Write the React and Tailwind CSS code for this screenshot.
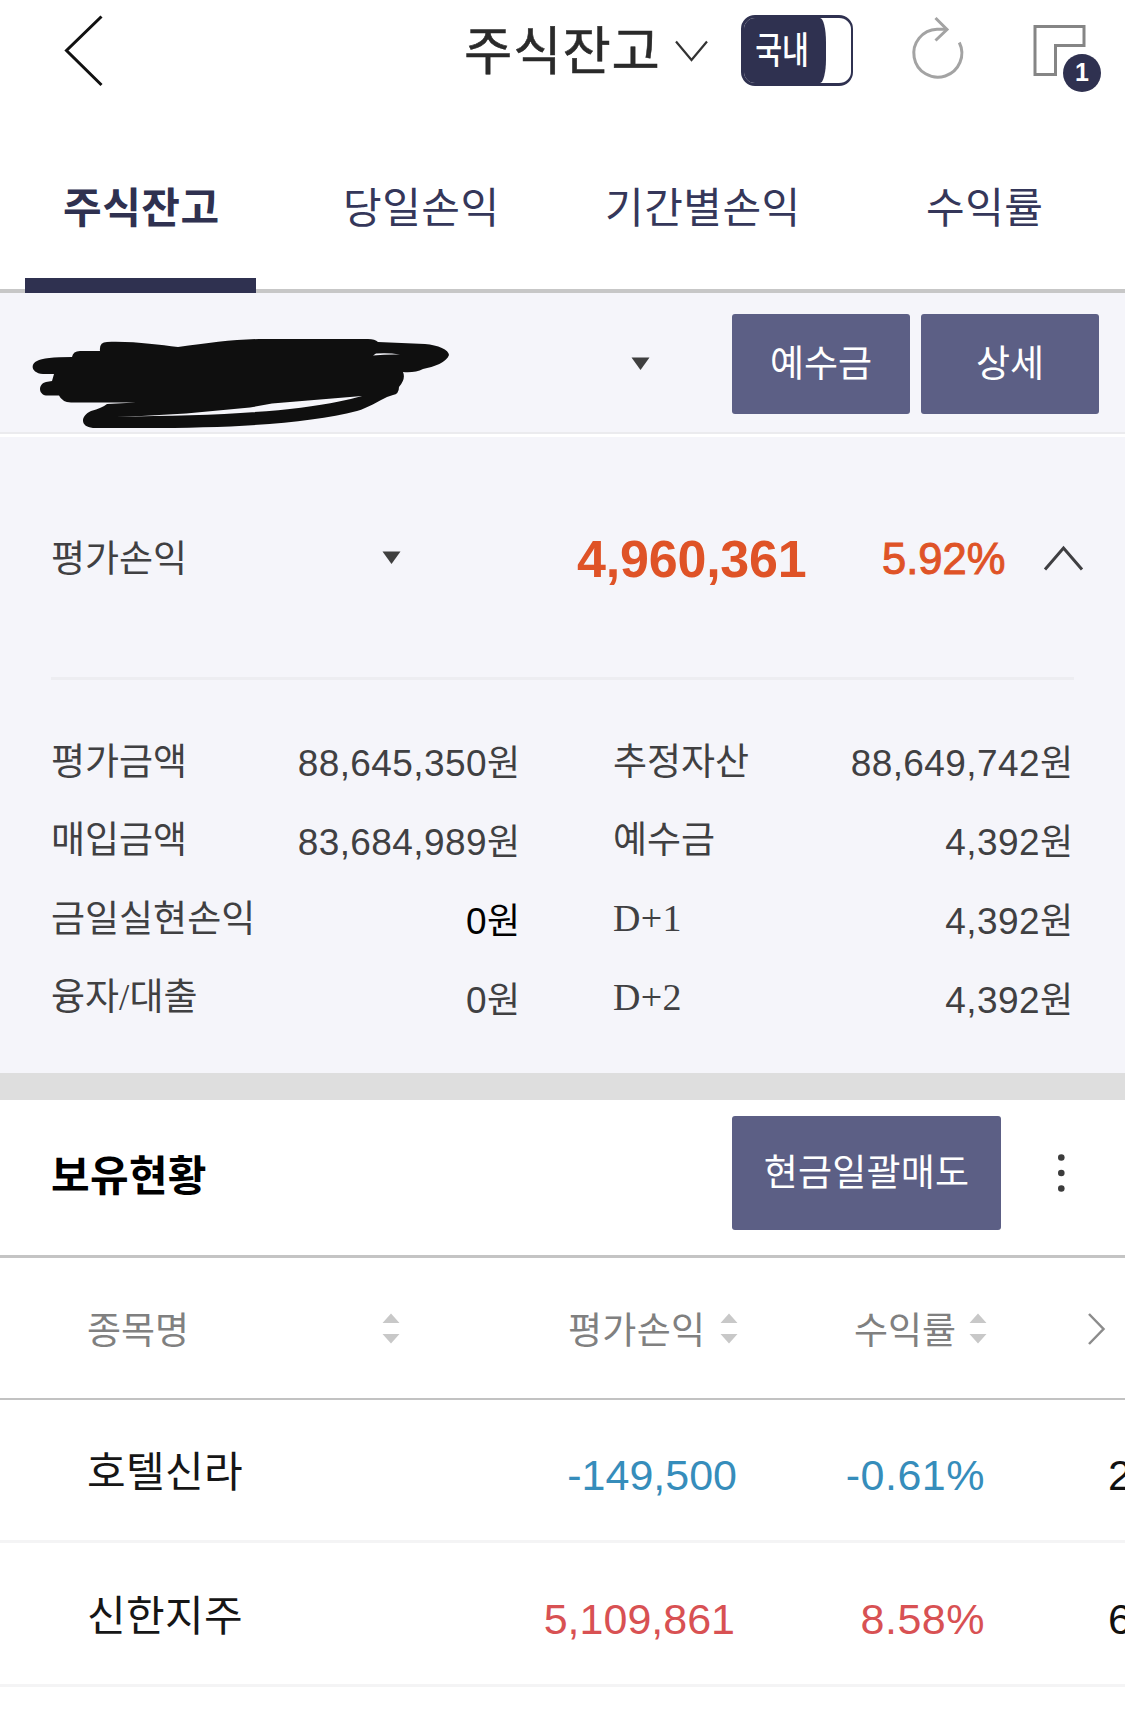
import React from "react";

const summary = [
  ["평가금액", "88,645,350", "추정자산", "88,649,742"],
  ["매입금액", "83,684,989", "예수금", "4,392"],
  ["금일실현손익", "0", "D+1", "4,392"],
  ["융자/대출", "0", "D+2", "4,392"],
];

const holdings = [
  { name: "호텔신라", profit: "-149,500", rate: "-0.61%", next: "2", color: "text-[#368dbb]", row: "h-[143px]", pad: "mt-[39px]", num: "mt-[45px]", tail: "w-[297px]" },
  { name: "신한지주", profit: "5,109,861", rate: "8.58%", next: "6", color: "text-[#d85153]", row: "h-[144px]", pad: "mt-[40px]", num: "mt-[46px]", tail: "w-[297px] pr-[2px]" },
];

function Caret() {
  return (
    <svg className="block h-[13px] w-[19px] shrink-0" viewBox="0 0 19 13">
      <path d="M0.5 0.5H18.5L9.5 13Z" fill="#3f3f3f" />
    </svg>
  );
}

function Sort() {
  return (
    <svg className="block h-[31px] w-[18px] shrink-0" viewBox="0 0 18 31">
      <path d="M0.5 10L9 0.5L17.5 10ZM0.5 21H17.5L9 30.5Z" fill="#c8c8c8" />
    </svg>
  );
}

function Label({ text }) {
  const [head, tail] = text.split("/");
  return (
    <span>
      {head}
      {tail && <span className="font-['Liberation_Serif',serif]">/</span>}
      {tail}
    </span>
  );
}

function Amount({ value, dark }) {
  return (
    <span className={dark ? "flex items-baseline justify-end text-black" : "flex items-baseline justify-end text-[#404042]"}>
      <span className="font-['Liberation_Sans','Noto_Sans_CJK_KR',sans-serif] text-[37px] tracking-[0.4px]">{value}</span>
      <span className="text-[36px]">원</span>
    </span>
  );
}

function Header() {
  return (
    <header className="flex h-[130px] items-start">
      <svg className="mt-[14px] ml-[62px] h-[74px] w-[44px]" viewBox="0 0 44 74" fill="none" stroke="#111" strokeWidth="3">
        <path d="M39.500 2.500L4.500 36.500L39.500 71" />
      </svg>
      <h1 className="mt-[10px] ml-[358px] w-[206px] text-[52.500px] leading-[74px] tracking-[0.9px] whitespace-nowrap text-[#2a2a2a] [-webkit-text-stroke:0.5px_#2a2a2a]">주식잔고</h1>
      <svg className="mt-[38px] ml-[4px] h-[26px] w-[36px]" viewBox="0 0 36 26" fill="none" stroke="#333" strokeWidth="2.200">
        <path d="M2 3.500L17.500 22L33 3.500" />
      </svg>
      <div className="mt-[15px] ml-[31px] flex h-[71px] w-[112px] overflow-hidden rounded-[14px] border-[3px] border-r-2 border-[#2f3150] bg-white">
        <span className="flex w-[82px] items-center justify-center rounded-r-[6px_24px] bg-[#2f3150] pr-[5px] pb-[4px] text-white">
          <span className="-mx-4 block scale-x-[0.79] text-[37px] leading-none font-medium">국내</span>
        </span>
      </div>
      <svg className="mt-[14px] ml-[55px] h-[70px] w-[58px]" viewBox="0 0 58 70" fill="none" stroke="#a3a3a3" strokeWidth="3">
        <path d="M51.300 28.500A24 24 0 1 1 29 15.200H38" />
        <path d="M27.500 4L39 15.500L27.500 26.500" />
      </svg>
      <div className="relative mt-[23px] ml-[66px] h-[70px] w-[70px]">
        <svg className="block h-[54px] w-[54px]" viewBox="0 0 54 54" fill="none" stroke="#858585" strokeWidth="3">
          <path d="M3 3.500H52V22.500H23.500V51.500H3Z" />
        </svg>
        <span className="absolute top-[31px] left-[31px] flex h-[38px] w-[38px] items-center justify-center rounded-full bg-[#2f3150] font-['Liberation_Sans',sans-serif] text-[25px] font-bold text-white">1</span>
      </div>
    </header>
  );
}

function Tabs() {
  return (
    <nav className="flex h-[163px] border-b-4 border-[#c7c7c7] text-[42px] leading-[60px] tracking-[0.5px] whitespace-nowrap text-[#35375a]">
      <div className="ml-[25px] h-[163px] w-[231px] shrink-0 border-b-[15px] border-[#2f3150] pt-[45px] pl-[38px] font-bold text-[#2f3150]">주식잔고</div>
      <div className="w-[262px] shrink-0 pt-[45px] pl-[87px]">당일손익</div>
      <div className="w-[318px] shrink-0 pt-[45px] pl-[87px]">기간별손익</div>
      <div className="shrink-0 pt-[45px] pl-[90px]">수익률</div>
    </nav>
  );
}

function AccountBar() {
  return (
    <section className="h-[144px] border-b-[3px] border-white bg-[#f5f5fa]">
      <div className="flex h-[141px] w-full items-start border-b-2 border-[#ebebee]">
        <svg className="mt-[42px] ml-[30px] h-[96px] w-[424px] shrink-0" viewBox="30 335 424 96">
          <path
            fill="#0f0f0f"
            fillRule="evenodd"
            d="M43 374C31 373 30 364 37 361Q44 357 72 357Q73 351 80 351H100Q99 342 107 342C135 341 158 345 178 347C210 343 235 339 264 339H368Q375 339 378 342L425 344C438 345 449 350 449 355C447 362 434 367 423 369Q415 373 403 372Q406 379 399 387Q399 394 393 395L387 397C378 401 368 408 357 411C310 423 240 428 143 428H93C80 427 80 416 91 411Q102 408 107 404L136 402.500H71Q62 402 59 395.500H46C38 394 38 384 46 382L52 381L54 374ZM116 416.500Q150 416 186 413.500L250 407.500L272 403.500L362 396Q350 399.500 339 401.500C290 412 210 416 116 416.500ZM373 355.500Q388 354 400 354.500Q388 352.500 376 353.500Z"
          />
        </svg>
        <div className="mt-[64px] ml-[177px]"><Caret /></div>
        <button className="mt-[21px] ml-[82px] h-[100px] w-[178px] shrink-0 rounded-[3px] bg-[#5c5f85] pb-[4px] text-[37px] text-white">예수금</button>
        <button className="mt-[21px] ml-[11px] h-[100px] w-[178px] shrink-0 rounded-[3px] bg-[#5c5f85] pb-[4px] text-[37px] text-white">상세</button>
      </div>
    </section>
  );
}

function Summary() {
  return (
    <section className="h-[636px] bg-[#f5f5fa] px-[51px]">
      <div className="flex h-[243px] items-start border-b-[3px] border-[#ededf1]">
        <span className="mt-[92px] w-[331px] shrink-0 text-[37px] leading-[54px] text-[#404042]">평가손익</span>
        <div className="mt-[114px] shrink-0"><Caret /></div>
        <span className="mt-[92px] ml-[176px] w-[246px] shrink-0 font-['Liberation_Sans',sans-serif] text-[52px] leading-[60px] font-bold tracking-[-0.2px] text-[#df5327]">4,960,361</span>
        <span className="mt-[92px] ml-[59px] w-[124px] shrink-0 font-['Liberation_Sans',sans-serif] text-[43.500px] leading-[60px] text-[#df5327] [-webkit-text-stroke:1px_#df5327]">5.92%</span>
        <svg className="mt-[107px] ml-[37px] h-[28px] w-[42px] shrink-0" viewBox="0 0 42 28" fill="none" stroke="#3f3f42" strokeWidth="3">
          <path d="M2 25.500L20.500 4L39 25.500" />
        </svg>
      </div>
      <div className="pt-[40px]">
        {summary.map(([a, b, c, d], i) => (
          <div key={a} className="grid h-[78.800px] grid-cols-[230px_239px_93px_150px_310px] items-center text-[37px] whitespace-nowrap text-[#404042]">
            <Label text={a} />
            <div className="mt-[6px]"><Amount value={b} dark={i === 2} /></div>
            <span />
            <span className={i > 1 ? "mt-[4px] font-['Liberation_Serif',serif] text-[38px] tracking-[0.3px]" : ""}>{c}</span>
            <div className="mt-[6px]"><Amount value={d} /></div>
          </div>
        ))}
      </div>
    </section>
  );
}

function Holdings() {
  return (
    <section className="border-t-[27px] border-[#dedede]">
      <div className="flex h-[158px] items-start border-b-[3px] border-[#c4c4c4]">
        <h2 className="mt-[43px] ml-[51px] w-[681px] text-[42px] leading-[60px] font-bold tracking-[0.3px] text-black">보유현황</h2>
        <button className="mt-[16px] h-[114px] w-[269px] shrink-0 rounded-[3px] bg-[#5c5f85] pb-[4px] text-[37px] tracking-[0.2px] text-white">현금일괄매도</button>
        <svg className="mt-[52px] ml-[55px] h-[42px] w-[10px]" viewBox="0 0 10 42" fill="#3c3c3c">
          <circle cx="5.300" cy="5.500" r="3.300" />
          <circle cx="5.300" cy="21" r="3.300" />
          <circle cx="5.300" cy="36.500" r="3.300" />
        </svg>
      </div>
      <div className="flex h-[142px] items-center border-b-2 border-[#c2c2c2] pl-[87px] text-[37px] whitespace-nowrap text-[#808080]">
        <span className="mt-px w-[295px] shrink-0">종목명</span>
        <Sort />
        <span className="mt-px ml-[168px] w-[152px] shrink-0 tracking-[0.3px]">평가손익</span>
        <Sort />
        <span className="mt-px ml-[116px] w-[115px] shrink-0">수익률</span>
        <Sort />
        <svg className="mt-[2px] ml-[100px] h-[34px] w-[20px] shrink-0" viewBox="0 0 20 34" fill="none" stroke="#8c8c8c" strokeWidth="2.500">
          <path d="M2 2L16.500 17L2 32" />
        </svg>
      </div>
      {holdings.map((h) => (
        <div key={h.name} className={`${h.row} flex items-start overflow-hidden border-b-[3px] border-[#f4f4f5] whitespace-nowrap`}>
          <span className={`${h.pad} ml-[87px] w-[353px] shrink-0 text-[42px] leading-[60px] tracking-[0.4px] text-[#161616]`}>{h.name}</span>
          <div className={`${h.num} ${h.color} flex font-['Liberation_Sans',sans-serif] text-[43px] leading-[60px]`}>
            <span className={`${h.tail} text-right`}>{h.profit}</span>
            <span className="w-[248px] text-right tracking-[0.5px]">{h.rate}</span>
            <span className="ml-[123px] text-[#111]">{h.next}</span>
          </div>
        </div>
      ))}
    </section>
  );
}

export default function App() {
  return (
    <main className="h-[1715px] w-[1125px] overflow-hidden bg-white font-['Noto_Sans_CJK_KR',sans-serif] font-normal">
      <Header />
      <Tabs />
      <AccountBar />
      <Summary />
      <Holdings />
    </main>
  );
}
